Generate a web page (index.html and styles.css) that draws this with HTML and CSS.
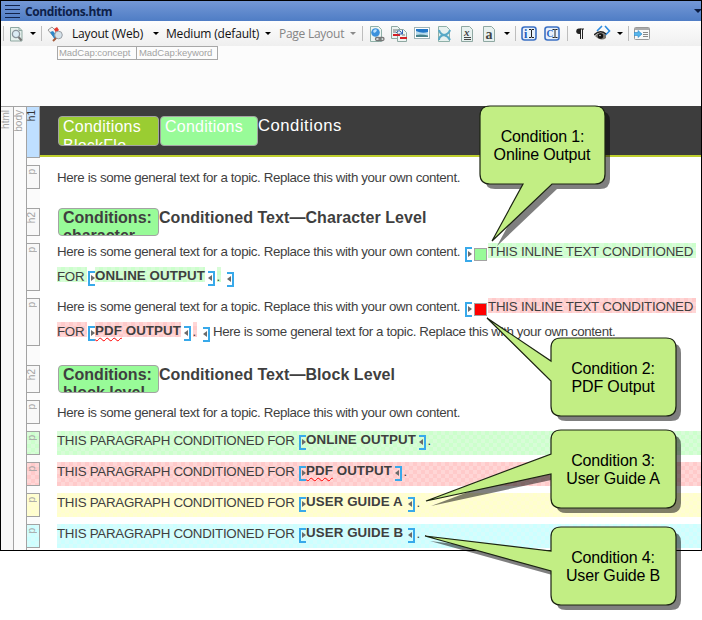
FILE: index.html
```html
<!DOCTYPE html>
<html lang="en">
<head>
<meta charset="utf-8">
<title>Conditions.htm</title>
<link rel="stylesheet" href="styles.css">
</head>
<body>
<div class="window">
  <header class="titlebar">
    <svg class="grip" width="15" height="13" viewBox="0 0 15 13"><path d="M0 .5h15M0 4.5h15M0 8.5h15M0 12.5h15" stroke="#12234a"/></svg>
    <span class="title">Conditions.htm</span>
    <svg class="title-arrow" width="7" height="4" viewBox="0 0 7 4"><path d="M0 0h8L4 4z" fill="#0c1c40"/></svg>
  </header>

  <nav class="toolbar">
    <i class="sep"></i>
    <svg width="15" height="16" viewBox="0 0 15 16"><path d="M.5 1.500h8.500l3 3v10.500H.5z" fill="#e6f0ec" stroke="#8fa8a2"/><path d="M9 1.500v3h3" fill="none" stroke="#8fa8a2"/><circle cx="6" cy="8" r="3.600" fill="#dcecf4" stroke="#8b949c" stroke-width="1.300"/><path d="M8.500 11l3 3.500" stroke="#777" stroke-width="2"/></svg>
    <i class="arrow"></i>
    <i class="sep"></i>
    <svg width="17" height="16" viewBox="0 0 17 16"><path d="M1 4l4-3 5 5-4 4z" fill="#f3f3f3" stroke="#999"/><path d="M7 3l3-2 2 3-3 3z" fill="#e23b30"/><path d="M3 6l3-1 5 6-3 3z" fill="#2c86c9"/><circle cx="11.500" cy="9" r="3.800" fill="#d5e2ea" stroke="#9a9fa6"/><path d="M9 12l-3 3" stroke="#a55b3c" stroke-width="2"/></svg>
    <span class="tool-text layout">Layout (Web)</span>
    <i class="arrow"></i>
    <span class="tool-text medium">Medium (default)</span>
    <i class="arrow"></i>
    <span class="tool-text page">Page Layout</span>
    <i class="arrow dim"></i>
    <i class="sep"></i>
    <svg width="15" height="16" viewBox="0 0 15 16"><path d="M.5.5h8l3 3v12H.5z" fill="#eef5f2" stroke="#8fb0a8"/><circle cx="5.500" cy="6.500" r="4.300" fill="#3b92dc"/><path d="M3 5q2-3 4-1l-1 2-2 1z" fill="#b8e0ff"/><g fill="none" stroke="#777" stroke-width="1.300"><rect x="5.500" y="11.500" width="5" height="3" rx="1.500"/><rect x="9" y="11.500" width="5" height="3" rx="1.500"/></g></svg>
    <svg width="17" height="16" viewBox="0 0 17 16"><path d="M.5.5h6l3 3v9h-9z" fill="#edf4f2" stroke="#8fa8a2"/><path d="M6.500 3.500h6l3 3v9h-9z" fill="#edf4f2" stroke="#8fa8a2"/><path d="M2 4h4M2 6h3M11 9h3" stroke="#777"/><path d="M2 9h7M9 12h7" stroke="#d41f26" stroke-width="2"/><path d="M5 7q3-4 5-1l1 2M11.500 4v4h-4" fill="none" stroke="#3361b5"/></svg>
    <svg width="16" height="16" viewBox="0 0 16 16"><rect x=".5" y="1.500" width="15" height="11" fill="#fff" stroke="#9fb3b5"/><path d="M2 3h12v4H2z" fill="#2378c8"/><path d="M2 5q6 3 12 1v4H2z" fill="#b9dced"/><path d="M2 9q5-1 12 .5V11H2z" fill="#47828b"/></svg>
    <svg width="14" height="16" viewBox="0 0 14 16"><path d="M.5.500h8l3 3v12H.5z" fill="#e7f1ef" stroke="#8fb0a8"/><path d="M1 4q1 4 5 5t6 5M12 4q-1 4-6 5t-5 5" fill="none" stroke="#58a9c6" stroke-width="2"/></svg>
    <svg class="glyph" width="14" height="16" viewBox="0 0 14 16"><path d="M.5.500h8l3 3v12H.5z" fill="#e7f1ef" stroke="#8fa8a2"/><text x="3" y="9.500" font-size="11" font-style="italic">x</text><path d="M3 11.500h7M3 13.500h7" stroke="#444"/></svg>
    <svg class="glyph" width="14" height="16" viewBox="0 0 14 16"><path d="M.5.500h8l3 3v12H.5z" fill="#e7f1ef" stroke="#8fa8a2"/><text x="2.500" y="12.500" font-size="14">a</text></svg>
    <i class="arrow"></i>
    <i class="sep"></i>
    <svg class="glyph" width="16" height="16" viewBox="0 0 16 16"><rect x="1" y="1" width="14" height="13" rx="2.500" fill="#e8f1fb" stroke="#3b70c4" stroke-width="1.600"/><text class="blue" x="3" y="11.500" font-size="12">i</text><path d="M8 3.500h2l.5.500.5-.5h2M10.500 4v7M8 11.500h2l.5-.5.5.500h2" fill="none" stroke="#222"/></svg>
    <svg class="glyph" width="16" height="16" viewBox="0 0 16 16"><rect x="1" y="1" width="14" height="13" rx="2.500" fill="#e8f1fb" stroke="#3b70c4" stroke-width="1.600"/><text class="blue" x="2.500" y="11" font-size="9.500">C</text><path d="M8.500 3.500h2l.5.500.5-.5h2M11 4v7M8.500 11.500h2l.5-.5.5.500h2" fill="none" stroke="#222"/></svg>
    <i class="sep"></i>
    <svg width="9" height="16" viewBox="0 0 9 16"><path d="M4 3h4M4.500 3v10M6.500 3v10" stroke="#222"/><path d="M4.500 2.500H3a2.500 2.500 0 000 5.500h1.500z" fill="#222"/></svg>
    <svg width="18" height="17" viewBox="0 0 18 17"><path d="M8 1L3 6M11 1l4.500 5L11 10.500" fill="none" stroke="#2b8be0" stroke-width="1.600"/><path d="M1 11q5-6 11-1v3q-5 4-11-2z" fill="#77746f"/><path d="M0 10q6-6 12-1" fill="none" stroke="#222" stroke-width="1.500"/><circle cx="6.500" cy="11" r="2.700" fill="#111"/><circle cx="6" cy="10.500" r=".7" fill="#fff"/></svg>
    <i class="arrow"></i>
    <i class="sep"></i>
    <svg width="17" height="14" viewBox="0 0 17 14"><rect x=".5" y=".5" width="15" height="12" rx="1" fill="#f8f8f8" stroke="#999"/><path d="M1 2h14" stroke="#aaa" stroke-width="2"/><path d="M9 5.500h5M9 7.500h5M9 9.500h5" stroke="#888"/><path d="M0 5.500h4V3.500l4 3.500-4 3.500v-2H0z" fill="#56b5ea" stroke="#2c86c9" stroke-width=".6"/></svg>
  </nav>

  <div class="meta"><span>MadCap:concept</span><span>MadCap:keyword</span></div>

  <main class="editor">
    <div class="bar html-bar"><span class="vert">html</span></div>
    <div class="bar body-bar"><span class="vert">body</span></div>
    <div class="rows">
      <section class="row r-h1">
        <div class="tag selected"><span class="vert">h1</span></div>
        <h1><span class="chip olive">Conditions BlockFlo</span><span class="chip green">Conditions</span><span class="h1-text">Conditions</span></h1>
      </section>
      <section class="row r-p single">
        <div class="tag"><span class="vert">p</span></div>
        <div class="content"><div class="line"><span class="general">Here is some general text for a topic. Replace this with your own content.</span></div></div>
      </section>
      <section class="row r-h2">
        <div class="tag"><span class="vert">h2</span></div>
        <h2><span class="chip green">Conditions: character</span><span class="h2-text">Conditioned Text—Character Level</span></h2>
      </section>
      <section class="row r-long">
        <div class="tag"><span class="vert">p</span></div>
        <div class="content">
          <div class="line"><span class="general">Here is some general text for a topic. Replace this with your own content.</span><i class="open first"></i><i class="swatch green"></i><span class="inline-text check-green">THIS INLINE TEXT CONDITIONED</span></div>
          <div class="line second"><span class="for check-green">FOR</span><i class="open"></i><b class="name online check-green">ONLINE OUTPUT</b><i class="close"></i><span class="dot check-green">.</span><i class="close outer"></i></div>
        </div>
      </section>
      <section class="row r-long">
        <div class="tag"><span class="vert">p</span></div>
        <div class="content">
          <div class="line"><span class="general">Here is some general text for a topic. Replace this with your own content.</span><i class="open first"></i><i class="swatch red"></i><span class="inline-text check-red">THIS INLINE TEXT CONDITIONED</span></div>
          <div class="line second"><span class="for check-red">FOR</span><i class="open"></i><b class="name pdf check-red"><span class="misspelt">PDF</span> OUTPUT</b><i class="close"></i><span class="dot check-red">.</span><i class="close outer"></i><span class="general after">Here is some general text for a topic. Replace this with your own content.</span></div>
        </div>
      </section>
      <section class="row r-h2 spaced">
        <div class="tag"><span class="vert">h2</span></div>
        <h2><span class="chip green">Conditions: block level</span><span class="h2-text">Conditioned Text—Block Level</span></h2>
      </section>
      <section class="row r-p single">
        <div class="tag"><span class="vert">p</span></div>
        <div class="content"><div class="line"><span class="general">Here is some general text for a topic. Replace this with your own content.</span></div></div>
      </section>
      <section class="row r-p block">
        <div class="tag check-green"><span class="vert">p</span></div>
        <div class="content check-green"><div class="line"><span class="para">THIS PARAGRAPH CONDITIONED FOR</span><i class="open"></i><b class="name online">ONLINE OUTPUT</b><i class="close"></i><span class="dot">.</span></div></div>
      </section>
      <section class="row r-p block">
        <div class="tag check-red"><span class="vert">p</span></div>
        <div class="content check-red"><div class="line"><span class="para">THIS PARAGRAPH CONDITIONED FOR</span><i class="open"></i><b class="name pdf"><span class="misspelt">PDF</span> OUTPUT</b><i class="close"></i><span class="dot">.</span></div></div>
      </section>
      <section class="row r-p block">
        <div class="tag check-yellow"><span class="vert">p</span></div>
        <div class="content check-yellow"><div class="line"><span class="para">THIS PARAGRAPH CONDITIONED FOR</span><i class="open"></i><b class="name guide">USER GUIDE A</b><i class="close"></i><span class="dot">.</span></div></div>
      </section>
      <section class="row r-p block">
        <div class="tag check-cyan"><span class="vert">p</span></div>
        <div class="content check-cyan"><div class="line"><span class="para">THIS PARAGRAPH CONDITIONED FOR</span><i class="open"></i><b class="name guide">USER GUIDE B</b><i class="close"></i><span class="dot">.</span></div></div>
      </section>
    </div>
  </main>
</div>

<svg class="callouts" width="702" height="620" viewBox="0 0 702 620">
  <defs>
    <path id="c1" d="M490 106h105q10 0 10 10v58q0 10-10 10h-43L492 241l31-57h-33q-10 0-10-10v-58q0-10 10-10z"/>
    <path id="c2" d="M561 338h105q10 0 10 10v58q0 10-10 10H561q-10 0-10-10v-25L487 318l64 43v-13q0-10 10-10z"/>
    <path id="c3" d="M561 430h105q10 0 10 10v58q0 10-10 10H561q-10 0-10-10v-24L426 501l125-47v-14q0-10 10-10z"/>
    <path id="c4" d="M561 527h105q10 0 10 10v58q0 10-10 10H561q-10 0-10-10v-24L425 536l126 15v-14q0-10 10-10z"/>
  </defs>
  <g fill="#000" fill-opacity=".5" transform="translate(5 5)"><use href="#c1"/><use href="#c2"/><use href="#c3"/><use href="#c4"/></g>
  <g fill="#c2ee84" stroke="#1c2412" stroke-width="1.200"><use href="#c1"/><use href="#c2"/><use href="#c3"/><use href="#c4"/></g>
  <g class="callout-text">
    <text x="542.500" y="142">Condition 1:</text><text x="542" y="160">Online Output</text>
    <text x="613" y="374">Condition 2:</text><text x="613" y="392">PDF Output</text>
    <text x="613" y="466">Condition 3:</text><text x="613" y="484">User Guide A</text>
    <text x="613" y="563">Condition 4:</text><text x="613" y="581">User Guide B</text>
  </g>
</svg>
</body>
</html>
```
FILE: styles.css
```css
* { box-sizing: border-box; }
body {
  margin: 0;
  position: relative;
  height: 620px;
  overflow: hidden;
  background: #fff;
  font: 13.33px "Liberation Sans", Arial, sans-serif;
  color: #3f3f3f;
}
.window {
  width: 702px;
  height: 551px;
  border: 1px solid #000;
  background: #fcfcfc;
  overflow: hidden;
}

/* title bar */
.titlebar {
  height: 20px;
  display: flex;
  align-items: center;
  padding-left: 4px;
  background: linear-gradient(#7498d6, #4f7dc5);
}
.title {
  margin-left: 5px;
  font: bold 12px "Open Sans", sans-serif;
  letter-spacing: -.4px;
  color: #0d2149;
}
.title-arrow { margin-left: auto; }

/* toolbar */
.toolbar {
  height: 25px;
  padding: 0 0 0 2px;
  display: grid;
  grid-template-columns: 7px 20px 11px 6px 25px 81px 13px 99px 14px 71px 12px 8px 21px 23px 24px 23px 22px 21px 11px 6px 23px 23px 9px 18px 23px 11px 6px 20px;
  align-items: center;
  background: linear-gradient(#fdfdfd, #efefef);
}
.toolbar svg { display: block; }
.sep { width: 1px; height: 15px; background: #bdbdbd; }
.arrow {
  width: 0;
  border: 3px solid transparent;
  border-top-color: #000;
  border-bottom: 0;
}
.arrow.dim { border-top-color: #8a8a8a; }
.tool-text {
  font: 12px "Open Sans", sans-serif;
  color: #111;
  white-space: nowrap;
  letter-spacing: -.18px;
}
.tool-text.page { color: #858585; letter-spacing: -.26px; }
.glyph text { font-family: "Liberation Serif", serif; font-weight: bold; fill: #444; }
.glyph .blue { fill: #1f5fc0; }

/* meta markers */
.meta { height: 60px; padding-left: 56px; display: flex; align-items: flex-start; }
.meta span {
  height: 14px;
  width: 80px;
  padding-left: 1px;
  border: 1px solid #a8a8a8;
  font-size: 9.5px;
  line-height: 12px;
  letter-spacing: -.04px;
  color: #a3a3a3;
  white-space: nowrap;
}
.meta span + span { width: 82px; margin-left: -1px; padding-left: 2px; }

/* structure bars */
.editor { display: flex; height: 445px; background: #fff; }
.bar { width: 13px; border-top: 1px solid #a3a3a3; border-right: 1px solid #a3a3a3; background: #f7f7f7; }
.body-bar { width: 12px; background: #fbfbfb; border-right: 0; }
.vert {
  display: block;
  writing-mode: vertical-rl;
  transform: rotate(180deg);
  font-size: 10px;
  line-height: 11px;
  color: #a3a3a3;
}
.bar .vert { padding-bottom: 3px; line-height: 9px; }
.rows {
  flex: 1;
  display: flex;
  flex-direction: column;
  gap: 7px;
  background: linear-gradient(90deg, #a3a3a3 1px, #fbfbfb 1px 14px, #fff 14px);
}
.row { display: flex; flex: none; }
.tag {
  flex: none;
  width: 14px;
  margin-right: 17px;
  border: 1px solid #a3a3a3;
  background-color: #f8f8f8;
}
.tag .vert { padding-bottom: 3px; line-height: 10px; }
.tag.selected { background: #bfdfff; }
.tag.selected .vert { color: #333; }
.r-h1 { height: 52px; }
.r-p { height: 24px; }
.r-h2 { height: 28px; }
.r-long { height: 48px; }
.single + .r-h2, .r-h2.spaced { margin-top: 12px; }

/* headings */
h1, h2 { margin: 0; flex: 1; display: flex; font-size: 16px; line-height: 19px; }
h1 {
  height: 51px;
  margin-left: -17px;
  padding: 10px 0 0 18px;
  background: #3d3d3d;
  border-bottom: 2px solid #bfcf2e;
  font-weight: normal;
  color: #fff;
  letter-spacing: .24px;
}
.chip {
  flex: none;
  width: 101px;
  height: 30px;
  padding: 0 12px 0 4px;
  border: 1px solid #a3a3a3;
  border-radius: 4px;
  overflow: hidden;
}
h1 .chip + .chip { width: 98px; margin-left: 1px; }
.chip.olive { background: #9acd32; }
.chip.green { background: #98fb98; }
h1 .chip { height: 30px; }
.h1-text { font-size: 16.67px; letter-spacing: .52px; line-height: 20px; }
h2 { padding-left: 1px; }
h2 .chip { height: 28px; padding-right: 0; line-height: 18px; }
.h2-text { letter-spacing: .06px; white-space: nowrap; }

/* paragraphs */
.content { flex: 1; min-width: 0; }
.single .content { padding-top: 4px; }
.block .content { padding-top: 1px; }
.line { display: flex; height: 24px; }
.line > * { flex: none; height: 15px; white-space: nowrap; line-height: 17px; }
.general { width: 408px; letter-spacing: -.38px; }
.inline-text { width: 208px; margin-left: 1px; letter-spacing: -.22px; }
.for { width: 30px; margin-right: 1px; letter-spacing: -.3px; }
.para { width: 242px; letter-spacing: -.27px; }
.second > * { line-height: 19px; }
.line > .name { line-height: 15px; letter-spacing: .08px; }
.second > .name { line-height: 17px; }
.online { width: 110px; margin-right: 3px; }
.pdf { width: 86px; margin-right: 3px; }
.guide { width: 98px; margin-right: 4px; letter-spacing: .15px; }
.dot { width: 4px; margin: 0 6px 0 2px; text-indent: -.5px; }
.after { margin-left: 3px; letter-spacing: -.39px; }
.line > .open, .line > .close { position: relative; width: 7px; margin-top: 4px; border: 2px solid #38a9ea; }
.block .line > .open, .block .line > .close { margin-top: 3px; }
.line > .open { border-right: 0; }
.line > .open.first { margin-right: 2px; }
.line > .close { border-left: 0; }
.line > .close.outer { margin-top: 5px; }
.open::after, .close::after {
  content: "";
  position: absolute;
  top: 2px;
  border: 3.500px solid transparent;
}
.open::after { left: 1px; border-left: 4px solid #6b6b6b; border-right: 0; }
.close::after { right: 1px; border-right: 4px solid #6b6b6b; border-left: 0; }
.line > .swatch { width: 13px; height: 13px; margin-top: 5px; border: 1px solid #a3a3a3; }
.swatch.green { background: #98fb98; }
.swatch.red { background: #f00; }
.misspelt { text-decoration: underline wavy #f00 1px; text-underline-offset: 2px; text-decoration-skip-ink: none; }

/* condition highlights */
.check-green { background: repeating-conic-gradient(#ccffcc 0 25%, #d8fcd8 0 50%) 0 0 / 8px 8px; }
.check-red { background: repeating-conic-gradient(#ffcaca 0 25%, #ffd6d6 0 50%) 0 0 / 8px 8px; }
.check-yellow { background: repeating-conic-gradient(#ffffcb 0 25%, #fffcd4 0 50%) 0 0 / 8px 8px; }
.check-cyan { background: repeating-conic-gradient(#ccffff 0 25%, #d7fcfc 0 50%) 0 0 / 8px 8px; }

/* callouts */
.callouts { position: absolute; left: 0; top: 0; }
.callout-text text { font-size: 16px; letter-spacing: -.15px; text-anchor: middle; fill: #000; }
```
